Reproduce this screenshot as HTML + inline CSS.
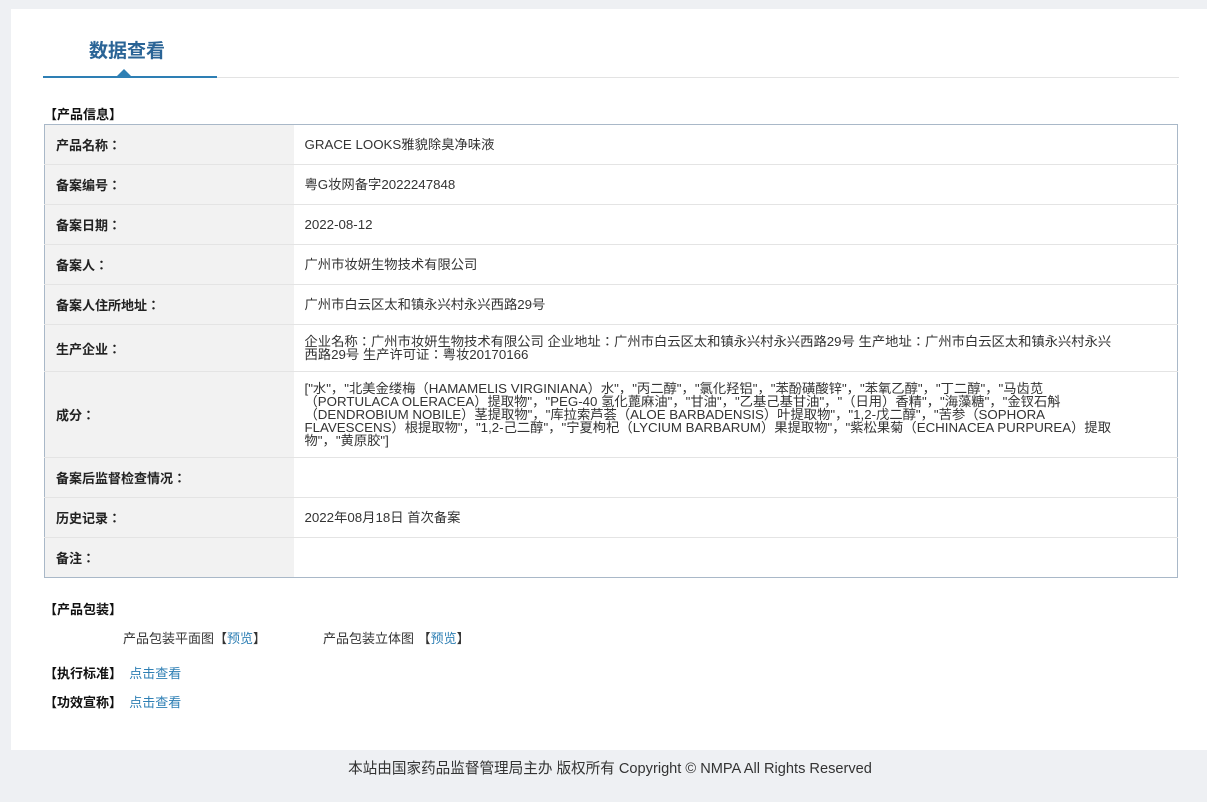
<!DOCTYPE html>
<html><head><meta charset="utf-8"><style>
*{margin:0;padding:0;box-sizing:border-box}
body{width:1207px;height:802px;background:#eef0f3;font-family:"Liberation Sans","Noto Sans CJK JP",sans-serif;font-size:13px;color:#333;position:relative;overflow:hidden}
.panel{position:absolute;left:11px;top:9px;width:1196px;height:741px;background:#fff}
.title{position:absolute;left:89px;top:36px;font-size:19px;font-weight:bold;color:#2a6496}
.line{position:absolute;left:43px;top:77px;width:1136px;height:1px;background:#e3e3e3}
.tab{position:absolute;left:43px;top:76px;width:174px;height:2px;background:#2e7fb4}
.tri{position:absolute;left:117px;top:69px;width:0;height:0;border-left:7px solid transparent;border-right:7px solid transparent;border-bottom:7px solid #2e7fb4}
.h{position:absolute;font-weight:bold;color:#111;font-size:13px}
table{position:absolute;left:44px;top:124px;width:1134px;border-collapse:collapse;border:1px solid #a9b8c8}
td{border-bottom:1px solid #e4e4e4;vertical-align:middle;font-size:13px}
td.l{width:249px;background:#f2f2f2;font-weight:bold;color:#222;padding-left:11px}
td.v{padding-left:11px;color:#333;line-height:13px;font-size:13.3px}
a{color:#2e7fb4;text-decoration:none}
.foot{position:absolute;top:757px;left:0;width:1220px;text-align:center;font-size:14.6px;color:#333}
</style></head><body>
<div class="panel"></div>
<div class="title">数据查看</div>
<div class="line"></div><div class="tab"></div><div class="tri"></div>
<div class="h" style="left:44px;top:104px">【产品信息】</div>
<table>
<tr style="height:40px"><td class="l">产品名称：</td><td class="v">GRACE LOOKS雅貌除臭净味液</td></tr>
<tr style="height:40px"><td class="l">备案编号：</td><td class="v">粤G妆网备字2022247848</td></tr>
<tr style="height:40px"><td class="l">备案日期：</td><td class="v">2022-08-12</td></tr>
<tr style="height:40px"><td class="l">备案人：</td><td class="v">广州市妆妍生物技术有限公司</td></tr>
<tr style="height:40px"><td class="l">备案人住所地址：</td><td class="v">广州市白云区太和镇永兴村永兴西路29号</td></tr>
<tr style="height:47px"><td class="l">生产企业：</td><td class="v">企业名称：广州市妆妍生物技术有限公司 企业地址：广州市白云区太和镇永兴村永兴西路29号 生产地址：广州市白云区太和镇永兴村永兴<br>西路29号 生产许可证：粤妆20170166</td></tr>
<tr style="height:86px"><td class="l">成分：</td><td class="v">["水"，"北美金缕梅（HAMAMELIS VIRGINIANA）水"，"丙二醇"，"氯化羟铝"，"苯酚磺酸锌"，"苯氧乙醇"，"丁二醇"，"马齿苋<br>（PORTULACA OLERACEA）提取物"，"PEG-40 氢化蓖麻油"，"甘油"，"乙基己基甘油"，"（日用）香精"，"海藻糖"，"金钗石斛<br>（DENDROBIUM NOBILE）茎提取物"，"库拉索芦荟（ALOE BARBADENSIS）叶提取物"，"1,2-戊二醇"，"苦参（SOPHORA<br>FLAVESCENS）根提取物"，"1,2-己二醇"，"宁夏枸杞（LYCIUM BARBARUM）果提取物"，"紫松果菊（ECHINACEA PURPUREA）提取<br>物"，"黄原胶"]</td></tr>
<tr style="height:40px"><td class="l">备案后监督检查情况：</td><td class="v"></td></tr>
<tr style="height:40px"><td class="l">历史记录：</td><td class="v">2022年08月18日 首次备案</td></tr>
<tr style="height:40px"><td class="l" style="border-bottom:none">备注：</td><td class="v" style="border-bottom:none"></td></tr>
</table>
<div class="h" style="left:44px;top:599px">【产品包装】</div>
<div style="position:absolute;left:123px;top:628px">产品包装平面图【<a>预览</a>】</div>
<div style="position:absolute;left:323px;top:628px">产品包装立体图 【<a>预览</a>】</div>
<div style="position:absolute;left:44px;top:663px"><b style="color:#111">【执行标准】</b>&nbsp; <a>点击查看</a></div>
<div style="position:absolute;left:44px;top:692px"><b style="color:#111">【功效宣称】</b>&nbsp; <a>点击查看</a></div>
<div class="foot">本站由国家药品监督管理局主办 版权所有 Copyright © NMPA All Rights Reserved</div>
</body></html>
